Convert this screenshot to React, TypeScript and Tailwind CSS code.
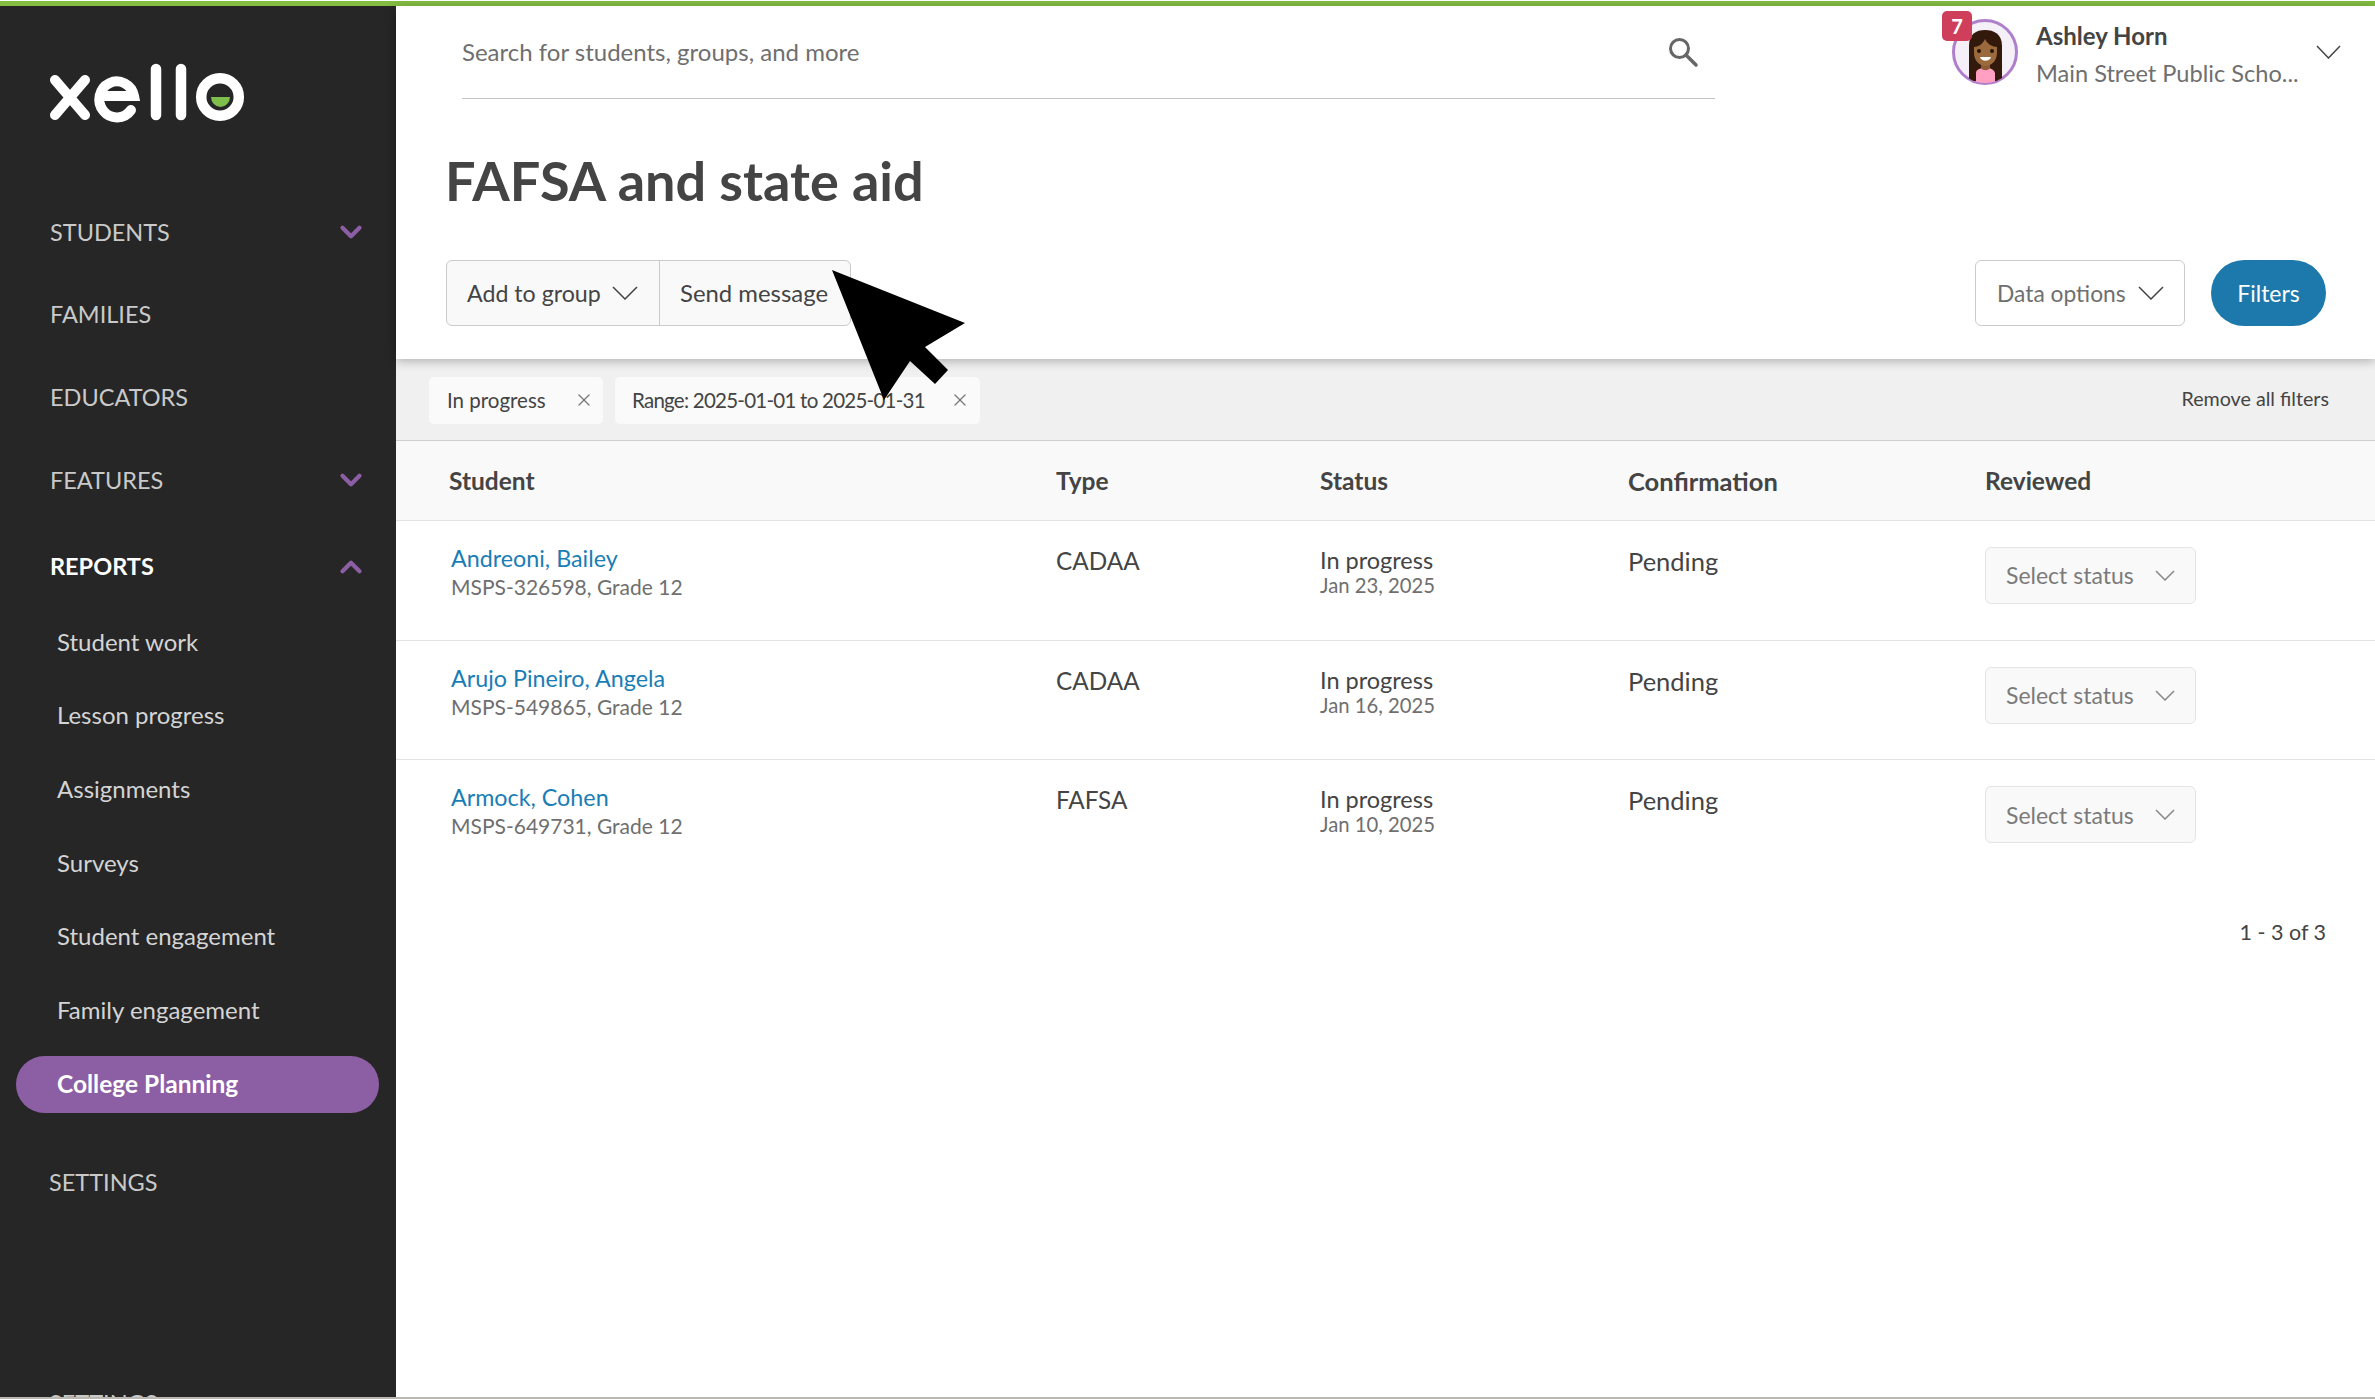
import { ChevronDown, ChevronUp, X } from "lucide-react"

const reportLinks = [
  "Student work",
  "Lesson progress",
  "Assignments",
  "Surveys",
  "Student engagement",
  "Family engagement",
]

const rows = [
  { name: "Andreoni, Bailey", meta: "MSPS-326598, Grade 12", type: "CADAA", date: "Jan 23, 2025" },
  { name: "Arujo Pineiro, Angela", meta: "MSPS-549865, Grade 12", type: "CADAA", date: "Jan 16, 2025" },
  { name: "Armock, Cohen", meta: "MSPS-649731, Grade 12", type: "FAFSA", date: "Jan 10, 2025" },
]

const tableCols = "grid grid-cols-[607px_264px_308px_357px_1fr]"

function Logo() {
  return (
    <svg width="200" height="62" viewBox="48 62 200 62" fill="none" className="block">
      <path d="M55 80 85 115M85 80 55 115" stroke="#fff" strokeWidth="10" strokeLinecap="round" />
      <path d="M102 96H134A17.5 18 0 1 0 131 110" stroke="#fff" strokeWidth="10" strokeLinecap="round" />
      <path d="M156 69V115M181 69V115" stroke="#fff" strokeWidth="10.5" strokeLinecap="round" />
      <circle cx="220" cy="97" r="18.8" stroke="#fff" strokeWidth="10.5" />
      <path d="M211 97H230A9.500 10 0 0 1 211 97Z" fill="#7fc04c" />
    </svg>
  )
}

function Avatar() {
  return (
    <svg width="66" height="66" viewBox="0 0 66 66" className="block">
      <defs>
        <clipPath id="avatar-clip">
          <circle cx="33" cy="33" r="31" />
        </clipPath>
      </defs>
      <circle cx="33" cy="33" r="31.500" fill="#f5f0f8" stroke="#b07fcb" strokeWidth="3" />
      <g clipPath="url(#avatar-clip)">
        <path d="M17 62V27C17 15 24 11 33 11S50 15 50 27V62Z" fill="#33190b" />
        <path d="M24 66V54C24 51 27 50 30 49H37C40 50 42 51 43 54V66Z" fill="#ff9fc2" />
        <path d="M29 42H38V49C36 52 31 52 29 49Z" fill="#8f5b33" />
        <path d="M22 28C26 28 31 25 33 20C35 25 41 28 45 28V34C45 42 39 47 33.500 47S22 42 22 34Z" fill="#9a6a3c" />
        <circle cx="27" cy="32" r="2" fill="#241208" />
        <circle cx="40" cy="32" r="2" fill="#241208" />
        <path d="M28 38H39C38 43 29 43 28 38Z" fill="#fff" />
      </g>
    </svg>
  )
}

// wide shallow caret used on all the dropdowns
function Caret({ w, h, className }: { w: number; h: number; className: string }) {
  return (
    <svg width={w} height={h} viewBox={`0 0 ${w} ${h}`} fill="none" stroke="currentColor" strokeWidth="1.5" className={className}>
      <path d={`M1 1 ${w / 2} ${h - 1} ${w - 1} 1`} />
    </svg>
  )
}

export default function App() {
  return (
    <div className="relative flex h-[1399px] w-full flex-col overflow-hidden bg-white font-[Lato,sans-serif] text-[#444]">
      <div className="mt-px h-[5px] shrink-0 bg-[#84bd41]" />
      <div className="flex min-h-0 flex-1 border-b-2 border-[#b8b8b0]">
        <aside className="flex w-[396px] shrink-0 flex-col overflow-hidden bg-[#262626] text-[23.500px] text-[#c9c9c9]">
          <div className="h-[185px] shrink-0 pt-[56px] pl-[48px]">
            <Logo />
          </div>
          <NavRow label="STUDENTS" chevron />
          <NavRow label="FAMILIES" />
          <NavRow label="EDUCATORS" />
          <NavRow label="FEATURES" chevron />
          <div className="mt-[4px] flex h-[82px] shrink-0 items-center justify-between pr-[28px] pl-[50px] font-bold text-white">
            REPORTS
            <ChevronUp className="size-[34px] text-[#8c5ea3]" strokeWidth={3} />
          </div>
          <div className="mt-[-3px] shrink-0 text-[24px]">
            {reportLinks.map((link) => (
              <div key={link} className="flex h-[73.700px] items-center pl-[57px] text-[#d4d4d4]">
                {link}
              </div>
            ))}
          </div>
          <div className="mt-px flex h-[73.700px] shrink-0 items-center px-4">
            <div className="flex h-[57px] w-[363px] items-center rounded-full bg-[#8c5ea3] pl-[41px] text-[24.500px] font-bold text-white">
              College Planning
            </div>
          </div>
          <div className="mt-[25px] flex h-[73px] shrink-0 items-center pl-[49px]">SETTINGS</div>
          <div className="mt-[166px] shrink-0 pl-[49px]">SETTINGS</div>
        </aside>

        <main className="min-w-0 flex-1">
          <div className="relative z-10 h-[353px] bg-white shadow-[0_2px_10px_rgba(0,0,0,0.28)]">
            <div className="flex h-[93px] items-start">
              <div className="mt-[-1px] ml-[66px] flex h-[94px] w-[1253px] shrink-0 items-center justify-between border-b border-[#c4c4c4] pr-[16px] text-[24px] text-[#6f6f6f]">
                Search for students, groups, and more
                <svg width="32" height="32" viewBox="0 0 32 32" fill="none" stroke="#666" strokeWidth="3">
                  <circle cx="12.500" cy="12.500" r="9" />
                  <path d="M19 19 29 29" strokeLinecap="round" strokeWidth="3.500" />
                </svg>
              </div>
              <div className="relative mt-[13px] ml-[237px] flex items-start">
                <div className="relative">
                  <Avatar />
                  <div className="absolute top-[-8px] left-[-10px] flex size-[30px] items-center justify-center rounded-[5px] bg-[#cf3f5c] text-[20px] font-bold text-white">
                    7
                  </div>
                </div>
                <div className="mt-[3px] ml-[18px] w-[280px] shrink-0">
                  <div className="text-[24px] leading-[28px] font-bold">Ashley Horn</div>
                  <div className="mt-[9px] text-[23.600px] leading-[28px] whitespace-nowrap text-[#6f6f6f]">Main Street Public Scho...</div>
                </div>
                <Caret w={25} h={14} className="mt-[26px] shrink-0 text-[#444]" />
              </div>
            </div>
            <h1 className="mt-[51px] ml-[49px] text-[54px] leading-[62px] font-bold">FAFSA and state aid</h1>
            <div className="mt-[48px] flex items-center pr-[49px] pl-[50px]">
              <div className="flex h-[66px] w-[405px] shrink-0 rounded-[6px] border border-[#cbcbcb] bg-[#f9f9f9] whitespace-nowrap">
                <div className="flex w-[213px] items-center gap-[11px] border-r border-[#cbcbcb] pl-[20px] text-[23.200px]">
                  Add to group
                  <Caret w={26} h={14} className="shrink-0" />
                </div>
                <div className="flex items-center pl-[20px] text-[23.900px]">Send message</div>
              </div>
              <div className="ml-auto flex h-[66px] w-[210px] shrink-0 items-center gap-[12px] rounded-[6px] border border-[#cbcbcb] pl-[21px] text-[22.800px] whitespace-nowrap text-[#6f6f6f]">
                Data options
                <Caret w={26} h={14} className="shrink-0 text-[#444]" />
              </div>
              <div className="ml-[26px] flex h-[66px] w-[115px] shrink-0 items-center justify-center rounded-full bg-[#1d79ab] text-[23px] text-white">
                Filters
              </div>
            </div>
          </div>

          <div className="flex h-[82px] items-center gap-[12px] border-b border-[#cfcfcf] bg-[#f0f0f0] pt-px pr-[46px] pl-[33px] text-[20.500px] whitespace-nowrap">
            <div className="flex h-[47px] w-[174px] shrink-0 items-center justify-between rounded-[5px] bg-[#fafafa] pr-[9px] pl-[18px]">
              In progress
              <X className="size-[20px] text-[#777]" strokeWidth={1.5} />
            </div>
            <div className="flex h-[47px] w-[365px] shrink-0 items-center justify-between rounded-[5px] bg-[#fafafa] pr-[10px] pl-[17px]">
              <span className="tracking-[-0.750px]">Range: 2025-01-01 to 2025-01-31</span>
              <X className="size-[20px] text-[#777]" strokeWidth={1.5} />
            </div>
            <span className="mt-[-2px] ml-auto text-[19.700px]">Remove all filters</span>
          </div>

          <div className={`${tableCols} h-[80px] items-center border-b border-[#e2e2e2] bg-[#f9f9f9] pt-px pl-[53px] text-[24.500px] font-bold`}>
            <div>Student</div>
            <div>Type</div>
            <div>Status</div>
            <div className="text-[25.500px]">Confirmation</div>
            <div>Reviewed</div>
          </div>

          {rows.map((row, i) => (
            <div key={row.name} className={`${tableCols} h-[119.700px] pl-[53px] ${i < 2 ? "border-b border-[#e2e2e2]" : ""}`}>
              <div className="pt-[22px] pl-[2px]">
                <div className="text-[23.300px] leading-[30px] text-[#1a7db5]">{row.name}</div>
                <div className="mt-px text-[21px] leading-[26px] text-[#6f6f6f]">{row.meta}</div>
              </div>
              <div className="pt-[25px] text-[24.300px] leading-[30px]">{row.type}</div>
              <div className="pt-[25px]">
                <div className="text-[23.500px] leading-[28px]">In progress</div>
                <div className="mt-[-1px] text-[20.300px] leading-[24px] text-[#6f6f6f]">{row.date}</div>
              </div>
              <div className="pt-[25px] text-[25.500px] leading-[30px]">Pending</div>
              <div className="pt-[26px]">
                <div className="flex h-[57px] w-[211px] items-center justify-between rounded-[6px] border border-[#e4e4e4] bg-[#f9f9f9] pr-[20px] pl-[20px] text-[23px] whitespace-nowrap text-[#7b7b7b]">
                  Select status
                  <Caret w={20} h={11} className="shrink-0 text-[#888]" />
                </div>
              </div>
            </div>
          ))}

          <div className="mt-[36px] pr-[49px] text-right text-[21.500px]">1 - 3 of 3</div>
        </main>
      </div>

      {/* pointer overlay from the recording */}
      <svg className="absolute top-0 left-0 z-20" width="1000" height="420" viewBox="0 0 1000 420">
        <polygon points="832,270 965,323 925,347 948,370 935,384 910,361 884,400" fill="#000" />
      </svg>
    </div>
  )
}

function NavRow({ label, chevron }: { label: string; chevron?: boolean }) {
  return (
    <div className="flex h-[82.700px] shrink-0 items-center justify-between pr-[28px] pl-[50px]">
      {label}
      {chevron ? <ChevronDown className="size-[34px] text-[#8c5ea3]" strokeWidth={3} /> : null}
    </div>
  )
}
